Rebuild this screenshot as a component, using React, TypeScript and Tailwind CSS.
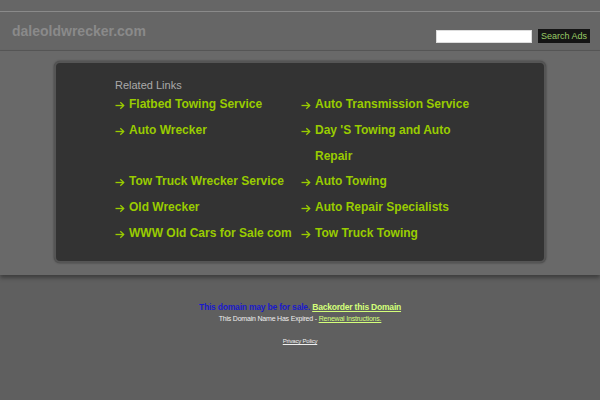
const links = [
  "Flatbed Towing Service",
  "Auto Transmission Service",
  "Auto Wrecker",
  "Day 'S Towing and Auto Repair",
  "Tow Truck Wrecker Service",
  "Auto Towing",
  "Old Wrecker",
  "Auto Repair Specialists",
  "WWW Old Cars for Sale com",
  "Tow Truck Towing",
];

function Arrow() {
  return (
    <svg width="10" height="9" viewBox="0 0 10 9" className="mt-[9px] shrink-0" fill="none" stroke="#9c0" strokeWidth="1.3">
      <path d="M0.5 4.5h8.3" />
      <path d="M5.3 1.2l3.4 3.3l-3.4 3.3" />
    </svg>
  );
}

function LinkItem({ text }: { text: string }) {
  return (
    <a href="#" className="flex gap-[4px] text-[12px] font-bold leading-[25.8px] text-[#9c0] no-underline">
      <Arrow />
      <span>{text}</span>
    </a>
  );
}

export default function App() {
  return (
    <div className="min-h-[400px] w-full bg-[#5f5f5f] font-['Liberation_Sans',Arial,sans-serif]">
      <div className="h-[11px] bg-[#666]" />
      <header className="flex h-[40px] items-center justify-between border-t border-b border-t-[#8a8a8a] border-b-[#575757] bg-[#666] pl-3 pr-[10px]">
        <h1 className="text-[14px] font-bold text-[#8a8a8a]">daleoldwrecker.com</h1>
        <form className="mt-[10px] flex items-center gap-[6px]">
          <input type="text" className="h-[13px] w-[96px] border border-[#ddd] bg-white" />
          <button type="button" className="h-[14px] bg-[#151515] px-[3px] text-[9px] leading-[14px] text-[#9c6]">
            Search Ads
          </button>
        </form>
      </header>
      <main className="bg-[#696969] pt-[10px] pb-[12px] shadow-[0_3px_4px_rgba(0,0,0,0.35)]">
        <div className="mx-auto h-[202px] w-[492px] rounded-[6px] border-2 border-[#555] bg-[#333] pl-[59px] pt-[15px] shadow-[0_0_2px_rgba(0,0,0,0.5)]">
          <p className="text-[11px] leading-[14px] text-[#aaa]">Related Links</p>
          <div className="grid grid-cols-[186px_190px]">
            {links.map((l) => (
              <LinkItem key={l} text={l} />
            ))}
          </div>
        </div>
      </main>
      <footer className="pt-[27px] text-center">
        <p className="text-[8.5px] font-bold leading-[11px] tracking-[-0.2px] text-[#1a1acc]">
          This domain may be for sale.{" "}
          <a href="#" className="text-[#d4ff7a] underline">Backorder this Domain</a>
        </p>
        <p className="mt-[1px] text-[7px] leading-[10px] tracking-[-0.2px] text-[#eee]">
          This Domain Name Has Expired -{" "}
          <a href="#" className="text-[#d4ff7a] underline">Renewal Instructions.</a>
        </p>
        <p className="mt-[13px] text-[6px] leading-[8px] tracking-[-0.2px] text-[#eee]">
          <a href="#" className="underline">Privacy Policy</a>
        </p>
      </footer>
    </div>
  );
}
